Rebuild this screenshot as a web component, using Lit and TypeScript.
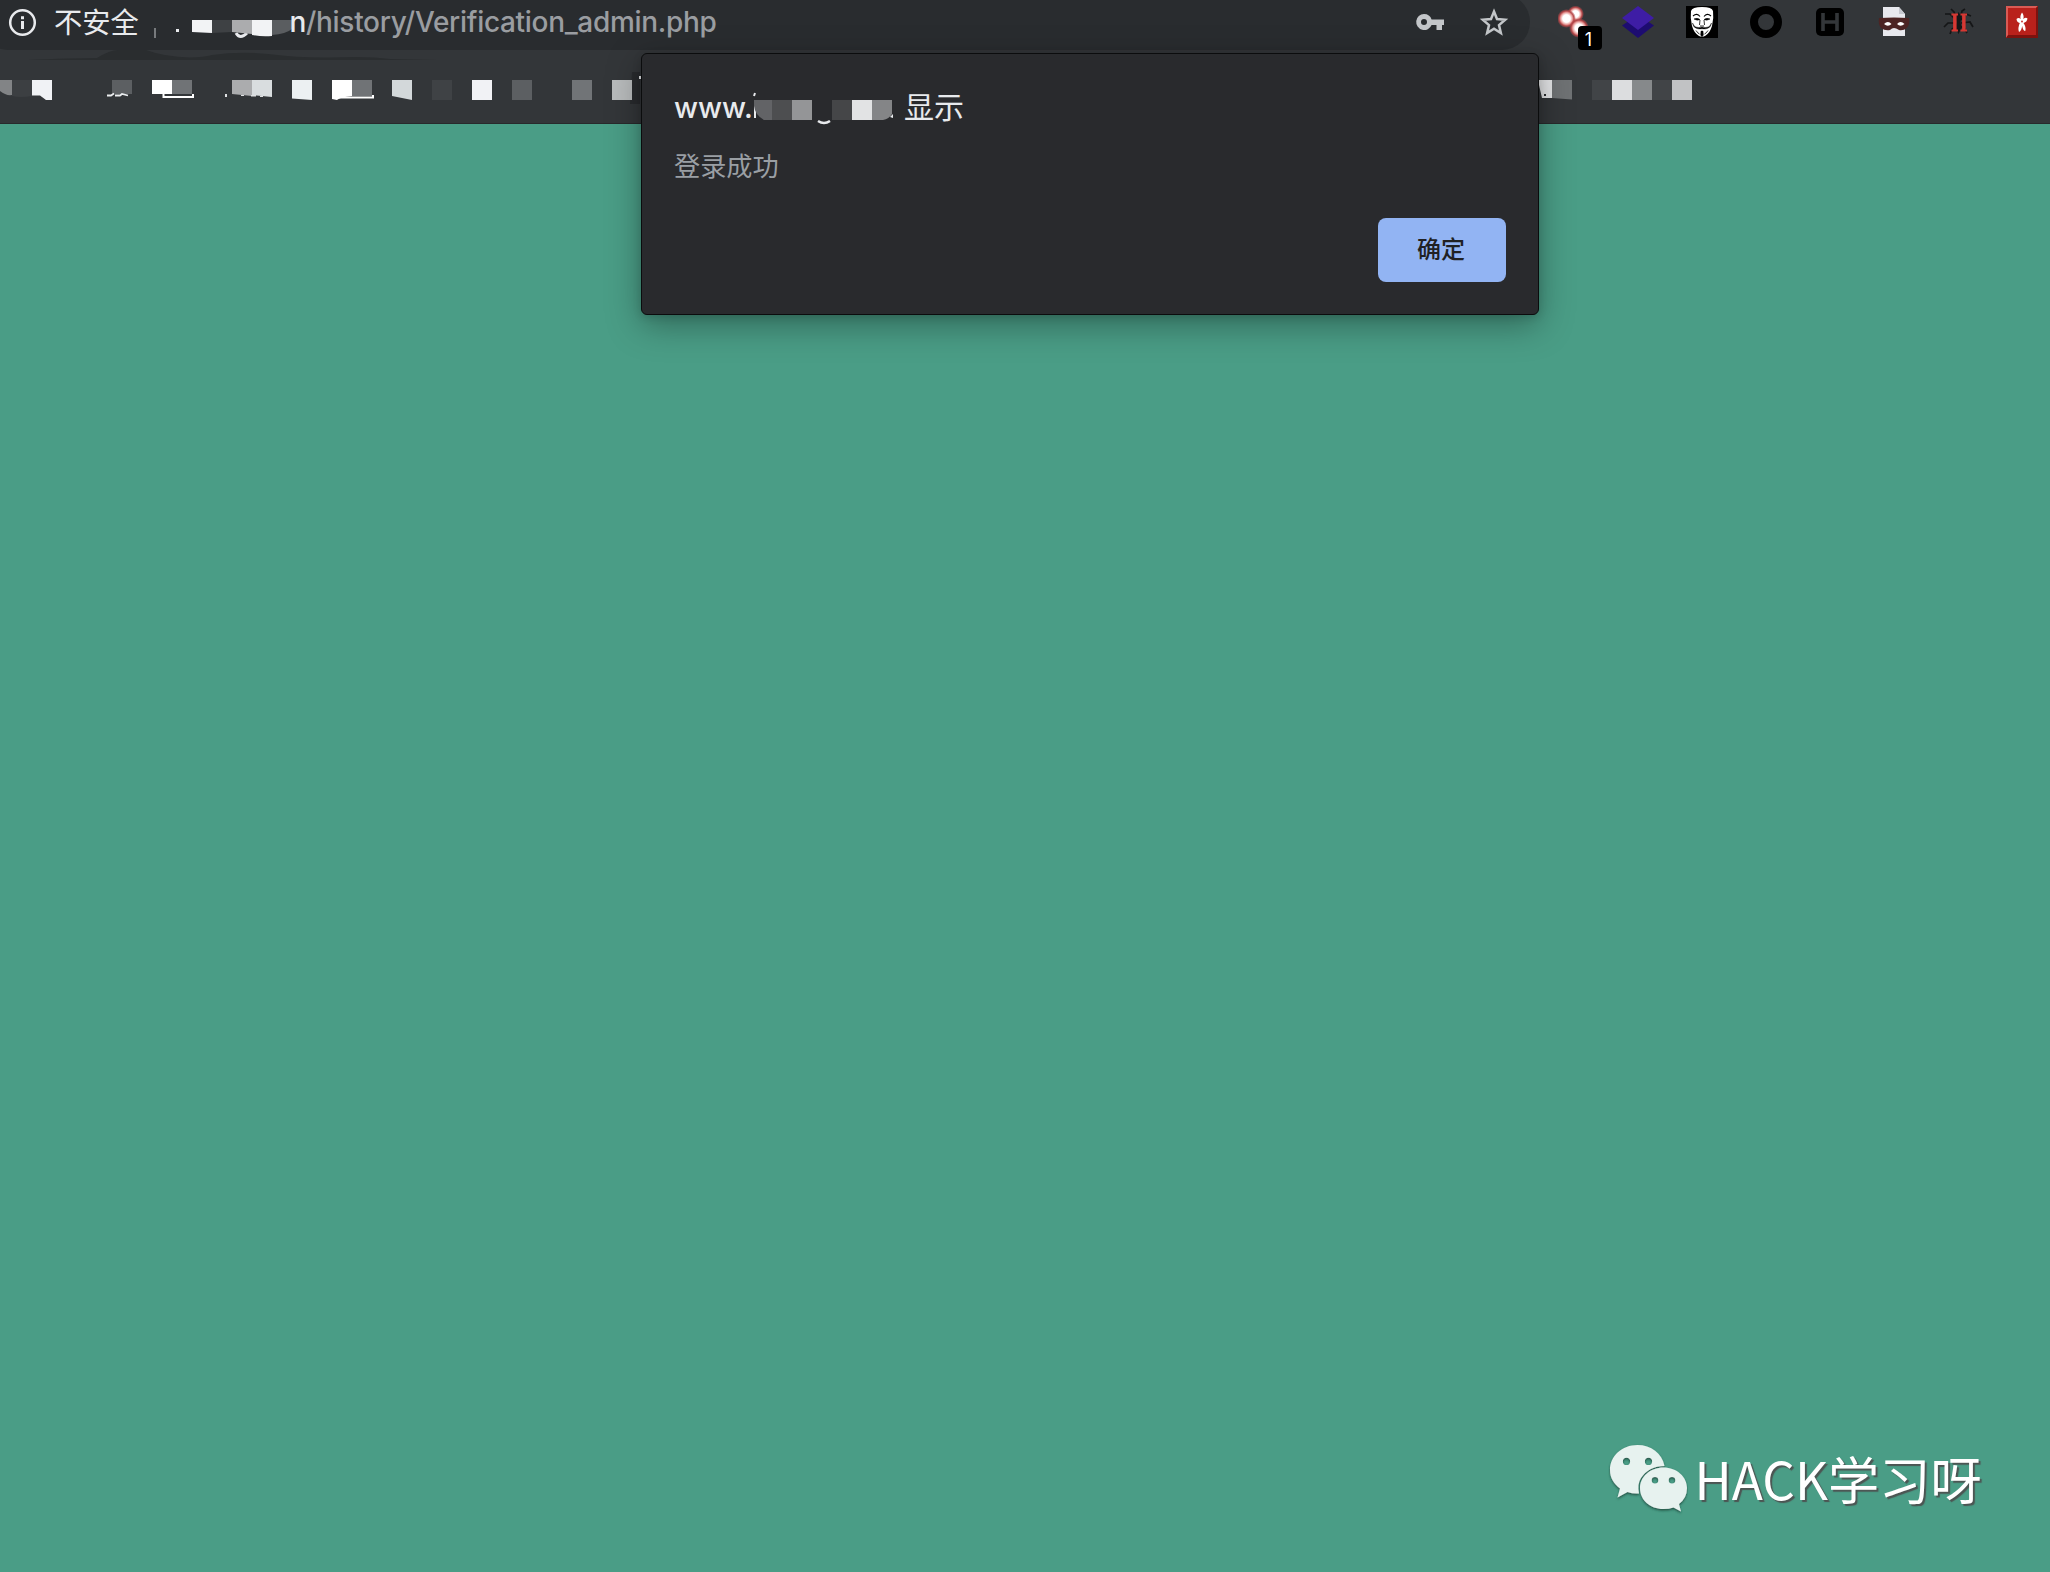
import { LitElement, html, svg, css } from "lit";
import { customElement } from "lit/decorators.js";

type Tile = [x: number, width: number, color: string, shape?: string];

const BOOKMARK_TILES: Tile[] = [
  [0, 12, "#828486", "M0 80H12V95Q6 96 0 91Z"],
  [12, 20, "#3c3f42", "M12 80H32V96Q20 98 12 96Z"],
  [32, 20, "#f0f2f5", "M32 80H52V100H46L40 95.500L32 95.500Z"],
  [112, 20, "#5c5f62", "M112 80H132V94H112Z"],
  [152, 20, "#ffffff", "M152 80H172V94H152Z"],
  [172, 20, "#707376", "M172 80H192V94H172Z"],
  [232, 20, "#abacae", "M232 80H252V96L232 94Z"],
  [252, 20, "#d9dddf", "M252 80H272V97L252 95Z"],
  [292, 20, "#ecf0f2", "M292 80H312V100L292 98.500Z"],
  [332, 20, "#ffffff", "M332 80H352V96Q340 97 337 100L332 99Z"],
  [352, 20, "#707376", "M352 80H372V96H352Z"],
  [392, 20, "#d3d8da", "M392 80H412V100L392 96Z"],
  [432, 20, "#3f4245"],
  [472, 20, "#f1f2f5"],
  [512, 20, "#5c5f62"],
  [572, 20, "#717477"],
  [612, 20, "#b8bbbc"],
  [1539, 13, "#e4e5e7", "M1539 80H1552V98H1542L1539 85Z"],
  [1552, 20, "#6f7274", "M1552 80H1572V99.500L1552 98Z"],
  [1592, 20, "#414447"],
  [1612, 20, "#dcdddf"],
  [1632, 20, "#86898b"],
  [1652, 20, "#414447"],
  [1672, 20, "#c1c2c4"],
];

@customElement("app-root")
export class AppRoot extends LitElement {
  static styles = css`
    :host {
      display: block;
      width: 2050px;
      height: 1572px;
      overflow: hidden;
      position: relative;
      background: #4a9d86;
      font-family: Inter, "Noto Sans CJK SC", sans-serif;
    }
    svg { display: block; flex: none; }
    .chrome {
      height: 124px;
      box-sizing: border-box;
      background: #333639;
      border-bottom: 1px solid #282a2c;
      overflow: hidden;
    }
    .toolbar { display: flex; height: 50px; }
    .address {
      box-sizing: border-box;
      width: 1550px;
      height: 56px;
      margin: -6px 0 0 -20px;
      padding: 6px 21px 0 28px;
      border-radius: 28px;
      background: #292c2f;
      display: flex;
      align-items: center;
      flex: none;
    }
    .insecure {
      font: 400 28.3px/44px "Noto Sans CJK SC", sans-serif;
      color: #e8eaed;
      margin-left: 16px;
      width: 98px;
      height: 44px;
      margin-top: -8px;
      white-space: nowrap;
    }
    .url {
      color: #9a9da1;
      font-size: 28px;
      font-weight: 450;
      line-height: 44px;
      margin: -6px 0 0 -2.5px;
      white-space: nowrap;
      letter-spacing: -0.31px;
    }
    .host { color: #e8eaed; }
    .redacted { margin-top: -6px; }
    .actions { display: flex; gap: 34px; margin: -6px 0 0 auto; }
    .extensions { display: flex; gap: 32px; padding: 6px 0 0 28px; }
    .first { margin-right: -14px; }
    .bookmarks { margin-top: -50px; height: 123px; pointer-events: none; }
    .dialog {
      position: absolute;
      left: 641px;
      top: 53px;
      width: 898px;
      height: 262px;
      box-sizing: border-box;
      border: 1px solid #0b0c0d;
      border-radius: 6px;
      background: #292a2d;
      box-shadow: 0 10px 34px rgba(0, 0, 0, 0.34), 0 2px 8px rgba(0, 0, 0, 0.14);
      padding: 34px 32px 32px 32px;
      display: flex;
      flex-direction: column;
    }
    .title {
      display: flex;
      height: 40px;
      font-size: 29px;
      line-height: 40px;
      color: #e8eaed;
    }
    .www { width: 78px; white-space: nowrap; font-weight: 450; }
    .shows { font: 400 30px/40px "Noto Sans CJK SC", sans-serif; margin: -3px 0 0 7px; }
    .message {
      margin-top: 17px;
      font: 400 26.2px/40px "Noto Sans CJK SC", sans-serif;
      color: #9a9fa4;
    }
    .ok {
      align-self: flex-end;
      margin-top: auto;
      width: 128px;
      height: 64px;
      border: 0;
      border-radius: 8px;
      padding: 0 2px 4px 0;
      background: #92b4f3;
      color: #202124;
      font: 500 24px/36px "Noto Sans CJK SC", sans-serif;
    }
    .watermark {
      position: absolute;
      left: 1606px;
      top: 1440px;
      display: flex;
      align-items: flex-start;
    }
    .label {
      margin: 0 0 0 6.5px;
      font: 400 51.2px/76px "Noto Sans CJK SC", sans-serif;
      color: #fff;
      text-shadow: 2px 2px 1px #4c5553;
      white-space: nowrap;
    }
  `;

  private infoIcon() {
    return svg`<svg class="redacted" width="30" height="30" viewBox="0 0 30 30">
      <circle cx="14.500" cy="15.500" r="12.300" fill="none" stroke="#e8eaed" stroke-width="2.500"/>
      <path d="M13 9.300h3v2.900h-3zM13 14h3v8h-3z" fill="#e8eaed"/></svg>`;
  }

  private hostMosaic() {
    return svg`<svg class="redacted" width="140" height="44" viewBox="152 0 140 44">
      <path d="M154 28h2v10h-2z" fill="#777a7d"/>
      <path d="M176 29h3v3h-3z" fill="#e8eaed"/>
      <path d="M236 33Q240 40 247 33" fill="none" stroke="#e8eaed" stroke-width="3"/>
      <path d="M192 20h20v13l-20-1z" fill="#f2f3f5"/>
      <path d="M212 20h20v12l-20 1z" fill="#3e4144"/>
      <path d="M232 20h20v14l-20-2z" fill="#abacae"/>
      <path d="M252 20h20v16q-10 1-20-1z" fill="#f2f3f5"/>
      <path d="M272 20h20v9q-6 5-20 6z" fill="#5a5d60"/></svg>`;
  }

  private extensionIcons() {
    return [
      svg`<svg class="first" width="46" height="46" viewBox="0 0 46 46">
        <defs><radialGradient id="glow"><stop offset="0.400" stop-color="#fff"/><stop offset="0.620" stop-color="#e9a09d"/><stop offset="0.780" stop-color="#b44749"/><stop offset="1" stop-color="#b44749" stop-opacity="0"/></radialGradient></defs>
        <circle cx="17.500" cy="8" r="8.500" fill="url(#glow)"/><circle cx="8.500" cy="12.500" r="9.500" fill="url(#glow)"/><circle cx="21" cy="22" r="10" fill="url(#glow)"/>
        <rect x="20" y="20" width="24" height="24" rx="4" fill="#000"/>
        <text x="30.500" y="39.500" text-anchor="middle" font-family="Inter, sans-serif" font-size="18" fill="#fff">1</text></svg>`,
      svg`<svg width="32" height="32" viewBox="0 0 32 32"><path d="M0 19.500L16 9l16 10.500L16 32z" fill="#1d0c70"/><path d="M0 12L16 0l16 12-16 12z" fill="#3e1da5"/></svg>`,
      svg`<svg width="32" height="32" viewBox="0 0 32 32"><path d="M0 0h32v32H0z" fill="#000"/>
        <path d="M5 5Q6 1 16 1t11 4q1 7-1 15-2 7-7 10l-3 1-3-1q-5-3-7-10Q4 12 5 5z" fill="#fff"/>
        <path d="M7 10q4-3.500 7 .5M25 10q-4-3.500-7 .5" fill="none" stroke="#000" stroke-width="1.100"/>
        <path d="M8 13q3-1.500 6 .5-3 1.500-6-.5M24 13q-3-1.500-6 .5 3 1.500 6-.5" fill="#000" stroke="#000" stroke-width=".5"/>
        <path d="M14 14l-.5 5M18 14l.5 5M14 20h4" fill="none" stroke="#000" stroke-width=".8"/>
        <path d="M6.500 17q2 6 9.500 4 7.500 2 9.500-4-1 7-9.500 5.800Q7.500 24 6.500 17zM15 25h2l.4 4-1.400 2-1.400-2z" fill="#000" stroke="#000" stroke-width=".4"/>
        <path d="M10 24.500q2 3 3.500 3.500M22 24.500q-2 3-3.500 3.500" fill="none" stroke="#000" stroke-width=".8"/></svg>`,
      svg`<svg width="32" height="32" viewBox="0 0 32 32"><circle cx="16" cy="16" r="12" fill="none" stroke="#000" stroke-width="8"/></svg>`,
      svg`<svg width="32" height="32" viewBox="0 0 32 32"><rect x="2" y="2" width="28" height="28" rx="5" fill="#000"/><path d="M9 7v18M23 7v18M9 16h14" fill="none" stroke="#333639" stroke-width="3.600"/></svg>`,
      svg`<svg width="32" height="32" viewBox="0 0 32 32"><path d="M5 1h16l6 7v22H5z" fill="#e8e9ee"/><path d="M21 1l6 7h-6z" fill="#c6c8cf"/>
        <path d="M1 12q15-1 30 0 1 6-2 10-4 3-8 2-3-2-5-2t-4 2q-5 1-9-2-3-4-2-10z" fill="#4c2423"/>
        <path d="M6 18q4-3.800 7.500 0-3.500 3.400-7.500 0zM19 18q3.500-3.800 7.500 0-4 3.400-7.500 0z" fill="#fff"/></svg>`,
      svg`<svg width="32" height="32" viewBox="0 0 32 32"><g fill="none" stroke="#151617" stroke-width="1.700"><path d="M15 14l-3-8-3-3M18 14l2-9 3-2M14 14L8 8 3 8M19 14l5-6 5 2M14 17H6l-4 4M19 17l9-1 3 5M15 20l-5 3-2 5M18 20l5 3 2 4"/></g>
        <path d="M16.500 6l3 5-1 5 1 6-3 6-3-6 1-6-1-5z" fill="#151617"/>
        <path d="M9.500 7.500H16v1.900h-1.400v14.200H16v1.900H9.500v-1.900h1.600V9.400H9.500zM18.500 7.500H25v1.900h-1.400v14.200H25v1.900h-6.500v-1.900h1.600V9.400h-1.600z" fill="#d63833"/></svg>`,
      svg`<svg width="32" height="32" viewBox="0 0 32 32"><path d="M0 0h32v32H0z" fill="#b9211b"/><path d="M0 0h32l-2 2H2v28l-2 2z" fill="#d95b55"/><path d="M32 0v32H0l2-3h28V2z" fill="#7d120e"/>
        <path d="M16 6.500q2.400 3 1.300 6.500 2.500-2 4.200-.5-.5 3.500-4 4.500 2.800 4 1.800 8-2.300 0-3.100-5-.8 5-3.200 6-1.500-4 .8-9-3-.5-3.300-4 2-2 4.200 0Q13.600 10 16 6.500z" fill="#fff"/><circle cx="16" cy="15.500" r="1" fill="#c63a34"/></svg>`,
    ];
  }

  private bookmarks() {
    return svg`<svg class="bookmarks" width="2050" height="123" viewBox="0 0 2050 123">
      <path d="M28 60Q70 58 97 58Q110 50 118 50H146Q165 57 190 57.500Q204 57 212 55Q240 51 268 54Q300 58 330 57.500Q370 56 390 59L437 60Z" fill="#2a2d2f"/>
      <path d="M632 72h8v32h-10z" fill="#292b2e"/><path d="M639 76h2v3h-2z" fill="#e8eaed"/>
      ${BOOKMARK_TILES.map(([x, w, color, shape]) =>
        svg`<path d=${shape ?? `M${x} 80h${w}v20h-${w}z`} fill=${color}/>`)}
      <path d="M107 95.500h4l3-2M115 95.500h5l2-1.500 6 1.500" fill="none" stroke="#eceef0" stroke-width="1.800"/>
      <path d="M163.500 94v3H193v-3M337 97.500h36V95" fill="none" stroke="#fff" stroke-width="2"/>
      <path d="M225 94h2v3h-2zM241 95h3v1h-3zM251 95h5v1.500h-5zM260 96h3v1h-3z" fill="#dfe1e3"/>
      <path d="M1544 94h2v2h-2z" fill="#292b2e"/></svg>`;
  }

  render() {
    return html`
      <div class="chrome">
        <div class="toolbar">
          <div class="address">
            ${this.infoIcon()}
            <span class="insecure">不安全</span>
            ${this.hostMosaic()}
            <span class="url"><span class="host">n</span>/history/Verification_admin.php</span>
            <div class="actions">
              <svg width="30" height="30" viewBox="0 0 30 30"><path fill="#c3c6c9" fill-rule="evenodd" d="M9 7a8 8 0 0 1 7.600 5.500H29V18h-2v5h-5.500v-5h-4.900A8 8 0 1 1 9 7zm0 5a3 3 0 1 0 0 6 3 3 0 0 0 0-6z"/></svg>
              <svg width="30" height="30" viewBox="0 0 30 30"><path fill="none" stroke="#c3c6c9" stroke-width="2.500" d="M15 4.500l3 7.500 8.200.700-6.200 5.400 1.900 8-6.900-4.300-6.900 4.300 1.900-8-6.200-5.400 8.200-.700z"/></svg>
            </div>
          </div>
          <div class="extensions">${this.extensionIcons()}</div>
        </div>
        ${this.bookmarks()}
      </div>
      <div class="dialog">
        <div class="title">
          <span class="www">www.</span>
          <svg width="145" height="40" viewBox="752 88 145 40">
            <path d="M754 96l1-3M755 106v12" stroke="#e8eaed" stroke-width="2"/>
            <path d="M754 100h18v20h-8q-9-5-10-14z" fill="#626366"/><path d="M772 100h20v20h-20z" fill="#4d4e50"/><path d="M792 100h20v20h-20z" fill="#949597"/>
            <path d="M818 121q6 4 12 0" fill="none" stroke="#e8eaed" stroke-width="2.500"/>
            <path d="M832 100h20v20h-20z" fill="#454648"/><path d="M852 100h20v20h-20z" fill="#e2e3e4"/><path d="M872 100h20v14q-3 5-9 6h-11z" fill="#848587"/><path d="M890 117l3-3v4z" fill="#e8eaed"/>
          </svg>
          <span class="shows">显示</span>
        </div>
        <div class="message">登录成功</div>
        <button class="ok">确定</button>
      </div>
      <div class="watermark">
        <svg width="82" height="76" viewBox="1606 1440 82 76">
          <defs><filter id="soft" x="-10%" y="-10%" width="120%" height="130%"><feDropShadow dx="0" dy="1.500" stdDeviation="1" flood-color="#173f35" flood-opacity=".8"/></filter></defs>
          <g filter="url(#soft)" fill="#e7f2ef" fill-rule="evenodd">
            <path d="M1664.500 1466C1662 1453 1651 1445 1637.500 1445C1622 1445 1610 1456 1610 1470C1610 1478 1614 1484 1620 1488.500L1617.500 1497.500L1627.500 1492Q1633 1494 1639 1493.500Q1637 1484 1641 1478Q1649 1466 1664.500 1466ZM1626.500 1457.800a3.600 3.600 0 1 1 0 7.200a3.600 3.600 0 1 1 0-7.200ZM1648.500 1457.800a3.600 3.600 0 1 1 0 7.200a3.600 3.600 0 1 1 0-7.200Z"/>
            <path d="M1663.500 1467.500C1650 1467.500 1640 1477 1640 1488C1640 1500 1650 1509 1663.500 1509Q1669 1509 1673.500 1507.500L1681 1511.500L1679 1504Q1687 1498 1687 1488C1687 1477 1677 1467.500 1663.500 1467.500ZM1655 1477a3.300 3.300 0 1 1 0 6.600a3.300 3.300 0 1 1 0-6.600ZM1672 1477a3.300 3.300 0 1 1 0 6.600a3.300 3.300 0 1 1 0-6.600Z"/>
          </g>
        </svg>
        <span class="label">HACK学习呀</span>
      </div>
    `;
  }
}
